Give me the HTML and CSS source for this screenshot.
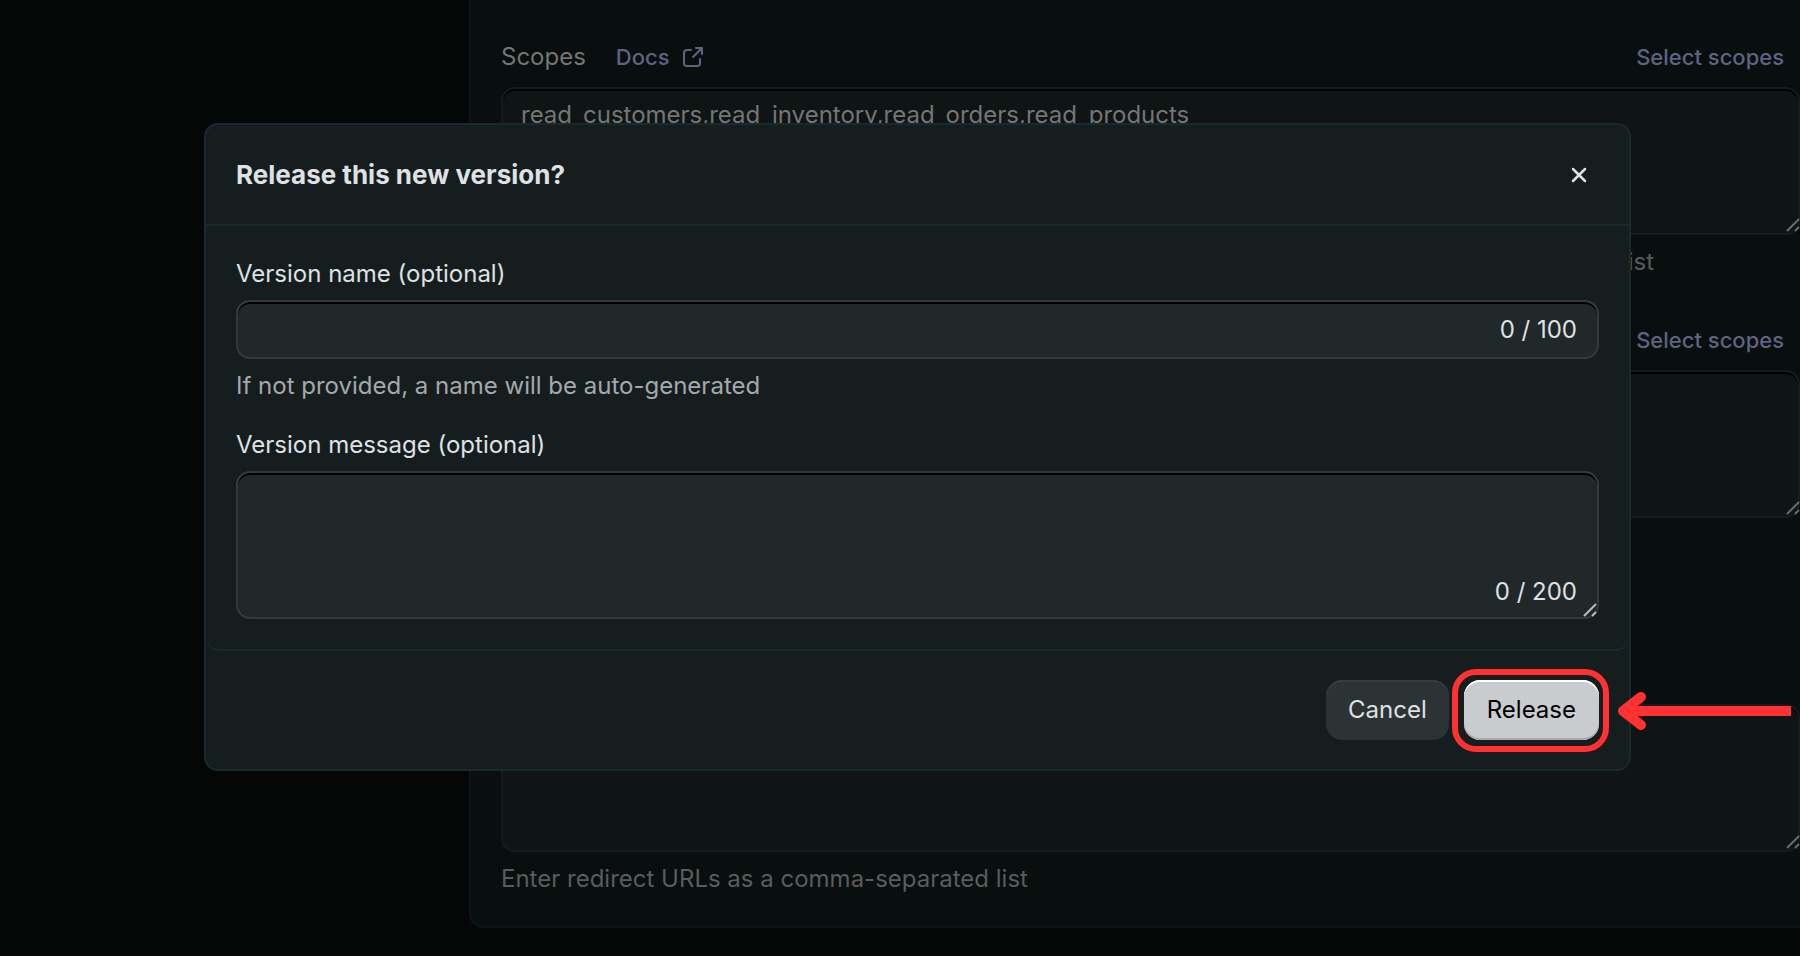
FILE: index.html
```html
<!DOCTYPE html>
<html lang="en">
<head>
    <meta charset="UTF-8">
    <meta name="viewport" content="width=device-width, initial-scale=1.0">
    <title>Release version</title>
    <link rel="stylesheet" href="styles.css">
</head>
<body>
    <main class="panel">
        <div class="group">
            <div class="label-row">
                <label for="scopes">Scopes</label>
                <a href="#" class="docs">Docs
                    <svg width="22" height="22" viewBox="0 0 22 22" fill="none" stroke="currentColor" stroke-width="2" stroke-linecap="round" stroke-linejoin="round">
                        <path d="M9 4H5a3 3 0 0 0-3 3v10a3 3 0 0 0 3 3h10a3 3 0 0 0 3-3v-4"/>
                        <path d="M14 2h6v6M20 2l-9 9"/>
                    </svg>
                </a>
                <button type="button" class="link-btn">Select scopes</button>
            </div>
            <div class="field">
                <textarea id="scopes">read_customers,read_inventory,read_orders,read_products</textarea>
                <svg class="grip" width="14" height="14" viewBox="0 0 14 14"><path d="M1 13L13 1M9 13l4-4"/></svg>
            </div>
            <p class="help help-wide">Enter scopes as a comma-separated list</p>
        </div>

        <div class="group">
            <div class="label-row">
                <label for="optional-scopes">Optional scopes</label>
                <button type="button" class="link-btn">Select scopes</button>
            </div>
            <div class="field">
                <textarea id="optional-scopes"></textarea>
                <svg class="grip" width="14" height="14" viewBox="0 0 14 14"><path d="M1 13L13 1M9 13l4-4"/></svg>
            </div>
        </div>

        <div class="group group-urls">
            <div class="label-row">
                <label for="redirects">Redirect URLs</label>
            </div>
            <div class="field">
                <textarea id="redirects"></textarea>
                <svg class="grip" width="14" height="14" viewBox="0 0 14 14"><path d="M1 13L13 1M9 13l4-4"/></svg>
            </div>
            <p class="help">Enter redirect URLs as a comma-separated list</p>
        </div>
    </main>

    <div class="overlay">
        <form class="modal" role="dialog" aria-labelledby="modal-title">
            <div class="modal-header">
                <h2 id="modal-title">Release this new version?</h2>
                <button type="button" class="close" aria-label="Close">
                    <svg width="18" height="18" viewBox="0 0 18 18" fill="none" stroke="currentColor" stroke-width="2.5" stroke-linecap="round">
                        <path d="M3 3l12 12M15 3L3 15"/>
                    </svg>
                </button>
            </div>

            <div class="modal-body">
                <label for="version-name">Version name (optional)</label>
                <div class="field">
                    <input type="text" id="version-name" maxlength="100">
                    <span class="count">0 / 100</span>
                </div>
                <p class="help">If not provided, a name will be auto-generated</p>

                <label for="version-message">Version message (optional)</label>
                <div class="field">
                    <textarea id="version-message" maxlength="200"></textarea>
                    <span class="count">0 / 200</span>
                    <svg class="grip" width="14" height="14" viewBox="0 0 14 14"><path d="M1 13L13 1M9 13l4-4"/></svg>
                </div>
            </div>

            <div class="modal-footer">
                <button type="button" class="btn">Cancel</button>
                <div class="highlight">
                    <button type="button" class="btn btn-primary">Release</button>
                    <svg class="arrow" width="176" height="40" viewBox="0 0 176 40" fill="none" stroke="#ff3131" stroke-width="10">
                        <path d="M8 20H174"/>
                        <path d="M24 6L6 20l18 14" stroke-linecap="round" stroke-linejoin="round"/>
                    </svg>
                </div>
            </div>
        </form>
    </div>
</body>
</html>
```

FILE: styles.css
```css
* {
    box-sizing: border-box;
}
body {
    margin: 0;
    min-height: 100vh;
    background: #040706;
    font-family: Inter, sans-serif;
    font-size: 24px;
    line-height: 32px;
    color: #747575;
}
h2, p {
    margin: 0;
}
button, input, textarea {
    font: inherit;
    color: inherit;
}
button {
    border: none;
    cursor: pointer;
}
label {
    display: block;
}

/* settings panel behind the dialog */
.panel {
    margin-left: 469px;
    padding: 41px 0 31px 30px;
    background: #090e0f;
    border: 2px solid #0a1517;
    border-top: none;
    border-right: none;
    border-bottom-left-radius: 14px;
}
.group {
    margin-bottom: 46px;
}
.group-urls {
    margin: 140px 0 0;
}
.label-row {
    display: flex;
    align-items: center;
    gap: 30px;
    margin-bottom: 14px;
}
.docs,
.link-btn {
    font-size: 22px;
    font-weight: 500;
    color: #5d6480;
}
.docs {
    display: flex;
    align-items: center;
    gap: 12px;
    text-decoration: none;
}
.link-btn {
    margin-left: auto;
    padding: 0 16px 0 0;
    background: none;
}
.field {
    position: relative;
}
.field input,
.field textarea {
    display: block;
    width: 100%;
    height: 148px;
    padding: 10px 18px;
    background: #0f1515;
    border: 2px solid #161b1b;
    border-radius: 14px;
    box-shadow: inset 0 2px 0 #000;
    outline: none;
    resize: none;
}
.grip {
    position: absolute;
    right: 0;
    bottom: 3px;
    fill: none;
    stroke: #686c6c;
    stroke-width: 2;
}
.help {
    margin-top: 11px;
    color: #5a5c5d;
}
.help-wide {
    padding-right: 146px;
    text-align: right;
}

/* dialog */
.overlay {
    position: fixed;
    inset: 0;
    padding: 123px 169px 0 204px;
}
.modal {
    background: #151d1f;
    border: 2px solid #182a2e;
    border-radius: 14px;
    color: #dfe1e4;
}
.modal-header {
    display: flex;
    align-items: center;
    justify-content: space-between;
    padding: 33px 41px 32px 30px;
    border-bottom: 2px solid #182a2e;
}
.modal-header h2 {
    font-size: 26px;
    line-height: 34px;
    font-weight: 700;
}
.close {
    display: flex;
    padding: 0;
    background: none;
}
.modal-body {
    padding: 32px 30px 30px;
    border-bottom: 2px solid #182a2e;
    border-radius: 0 0 14px 14px;
}
.modal-body label {
    margin-bottom: 10px;
}
.modal-body .field input,
.modal-body .field textarea {
    background: #20282a;
    border-color: #333a3b;
}
.modal-body .field input {
    height: 59px;
}
.modal-body .help {
    margin-bottom: 27px;
    color: #a4a9ac;
}
.count {
    position: absolute;
    right: 22px;
    bottom: 11px;
}
input + .count {
    bottom: 13px;
}
.modal-body .grip {
    right: 2px;
    bottom: 2px;
    stroke: #b9bebd;
}
.modal-footer {
    display: flex;
    justify-content: flex-end;
    gap: 15px;
    padding: 29px 30px;
}
.btn {
    height: 60px;
    padding: 0 22px;
    border-radius: 16px;
    background: #2c3335;
    box-shadow: inset 0 2px 0 #363d3f;
}
.btn-primary {
    padding: 0 23px;
    background: #c9cccf;
    color: #000;
    box-shadow: inset 0 2px 0 #fff, inset 0 -2px 0 #a9acaf;
}

/* callout round the release button */
.highlight {
    position: relative;
}
.highlight::after {
    content: "";
    position: absolute;
    inset: -11px -10px -12px -12px;
    border: 6px solid #ff3131;
    border-radius: 24px;
    pointer-events: none;
}
.arrow {
    position: absolute;
    top: 11px;
    left: calc(100% + 18px);
}
```
